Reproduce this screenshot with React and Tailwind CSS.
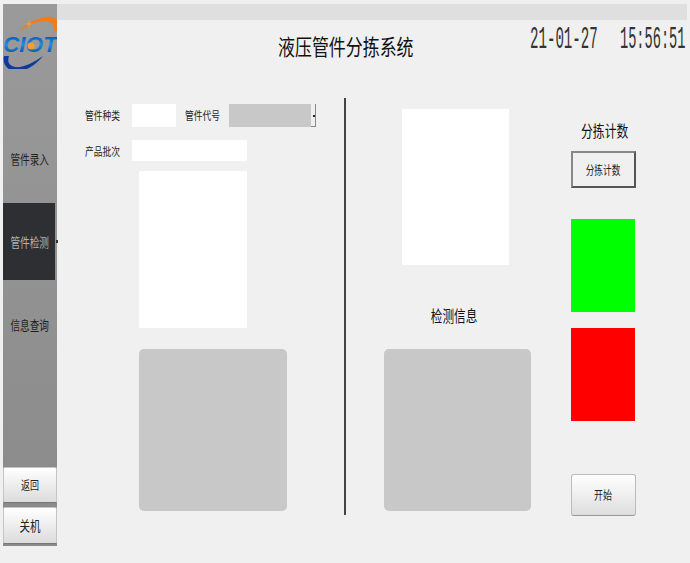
import React from "react";

const Logo = () => (
  <svg viewBox="0 0 54 54" className="w-[54px] h-[54px] mt-[11px] mb-[51px] block">
    <defs>
      <linearGradient id="blueText" x1="0" y1="0" x2="0" y2="1">
        <stop offset="0" stopColor="#0a3f9c" />
        <stop offset="0.5" stopColor="#1f8fe0" />
        <stop offset="1" stopColor="#0b3a94" />
      </linearGradient>
    </defs>
    <path d="M15 17 C22 10 32 4 42 2 C49 1 54 3 54 6 L54 15 L51 18 C52 12 50 7 43 6 C33 6 24 11 15 17 Z" fill="#ee7d1a" />
    <path d="M26 4 L27 8 L30 9 L27 10 L26 14 L25 10 L22 9 L25 8 Z" fill="#f09a30" />
    <text x="0" y="37" fontFamily="Liberation Sans, sans-serif" fontStyle="italic" fontWeight="700" fontSize="22" fill="url(#blueText)" textLength="54" lengthAdjust="spacingAndGlyphs">CIOT</text>
    <circle cx="28" cy="31" r="3.5" fill="#f3a02c" />
    <path d="M1 41 C-1 50 5 57 16 56 C27 55 35 47 40 41 C30 48 20 53 12 52 C6 51 4 47 6 41 Z" fill="#0d3b9a" />
  </svg>
);

const Label = ({ children, className = "" }) => (
  <span className={`block whitespace-nowrap text-[11.5px] leading-none text-[#222] origin-left scale-x-[.76] ${className}`}>
    {children}
  </span>
);

const NavItem = ({ children, active }) => (
  <div
    className={`relative h-[77px] w-[52px] flex items-center justify-center text-[13px] ${
      active ? "bg-[#2d2f33] text-[#b4b4b4]" : "text-[#1e1e1e]"
    }`}
  >
    <span className="whitespace-nowrap pl-[2px] scale-x-[.74]">{children}</span>
    {active && <span className="absolute left-[53px] top-[37px] w-[2px] h-[3px] bg-[#333]" />}
  </div>
);

const SideButton = ({ children, className = "" }) => (
  <button className={`w-[54px] rounded-[2px] bg-gradient-to-b from-white to-[#dcdcdc] border border-[#c4c4c4] border-b-[#777] flex items-center justify-center text-[#222] ${className}`}>
    <span className="scale-x-[.75] whitespace-nowrap">{children}</span>
  </button>
);

export default function App() {
  return (
    <div
      className="w-[690px] h-[563px] bg-[#f0f0f0] pt-1 pl-[3px] flex overflow-hidden"
      style={{ fontFamily: '"Noto Sans CJK SC", "Liberation Sans", sans-serif' }}
    >
      <aside className="w-[54px] h-[542px] bg-gradient-to-b from-[#9a9a9a] to-[#8a8a8a] flex flex-col">
        <Logo />
        <div className="flex flex-col gap-[6px]">
          <NavItem>管件录入</NavItem>
          <NavItem active>管件检测</NavItem>
          <NavItem>信息查询</NavItem>
        </div>
        <div className="flex-1" />
        <SideButton className="h-[36px] text-[12px]">返回</SideButton>
        <div className="h-[4px]" />
        <SideButton className="h-[37px] text-[14px]">关机</SideButton>
        <div className="h-[2px]" />
      </aside>

      <main className="relative w-[630px] flex flex-col">
        <div className="h-4 bg-[#dfdfdf]" />

        <header className="h-[78px] flex items-start">
          <h1 className="ml-[221px] mt-[13px] text-[22px] leading-[24px] text-[#111] font-normal whitespace-nowrap origin-left scale-x-[.77]">
            液压管件分拣系统
          </h1>
          <div
            className="absolute left-[473px] top-[19px] flex gap-[22px] text-[31px] leading-[34px] text-[#333] whitespace-nowrap"
            style={{ fontFamily: '"Liberation Mono", monospace' }}
          >
            <span className="block w-[68px] origin-left scale-x-[.455]">21-01-27</span>
            <span className="block w-[66px] origin-left scale-x-[.44]">15:56:51</span>
          </div>
        </header>

        <section className="flex">
          <div className="w-[287px] pl-7 pt-[6px]">
            <div className="flex items-center h-[23px]">
              <div className="w-[47px]"><Label>管件种类</Label></div>
              <div className="w-11 h-full bg-white" />
              <div className="w-[44px] ml-[9px]"><Label>管件代号</Label></div>
              <div className="relative w-[87px] h-full bg-[#c8c8c8]">
                <span className="absolute right-0 top-0 w-[5px] h-full bg-[#efefef] border-r border-b border-[#888]" />
                <span className="absolute right-[1px] top-[11px] w-[2px] h-[2px] bg-[#222]" />
              </div>
            </div>
            <div className="flex items-center h-[21px] mt-[13px]">
              <div className="w-[47px]"><Label className="pt-[3px]">产品批次</Label></div>
              <div className="w-[115px] h-full bg-white" />
            </div>
            <div className="ml-[54px] mt-[10px] w-[108px] h-[157px] bg-white" />
            <div className="ml-[54px] mt-[21px] w-[148px] h-[162px] rounded-[5px] bg-[#c8c8c8]" />
          </div>

          <div className="w-[2px] h-[417px] bg-[#444]" />

          <div className="w-[225px] flex flex-col">
            <div className="ml-[56px] mt-[11px] w-[107px] h-[156px] bg-white" />
            <div className="h-[84px] ml-[38px] w-[147px] pt-[18px] pr-[7px] flex items-center justify-center text-[15.5px] text-[#111]">
              <span className="scale-x-[.75] whitespace-nowrap">检测信息</span>
            </div>
            <div className="ml-[38px] w-[147px] h-[162px] rounded-[5px] bg-[#c8c8c8]" />
          </div>

          <div className="w-[65px] flex flex-col">
            <div className="mt-[22px] h-[22px] flex items-center justify-center text-[15.5px] text-[#111]">
              <span className="pl-[3px] scale-x-[.76] whitespace-nowrap">分拣计数</span>
            </div>
            <button className="mt-[9px] h-[37px] border-2 border-t-[#888] border-l-[#888] border-r-[#555] border-b-[#555] flex items-center justify-center text-[12px] text-[#222]">
              <span className="scale-x-[.72] whitespace-nowrap">分拣计数</span>
            </button>
            <div className="mt-[31px] w-16 h-[93px] bg-[#00ff00]" />
            <div className="mt-4 w-16 h-[93px] bg-[#ff0000]" />
            <button className="mt-[53px] h-[42px] rounded-[3px] border border-[#bbb] border-b-[#999] bg-gradient-to-b from-white to-[#dedede] flex items-center justify-center text-[12px] text-[#222]">
              <span className="scale-x-[.75]">开始</span>
            </button>
          </div>
        </section>
      </main>
    </div>
  );
}
